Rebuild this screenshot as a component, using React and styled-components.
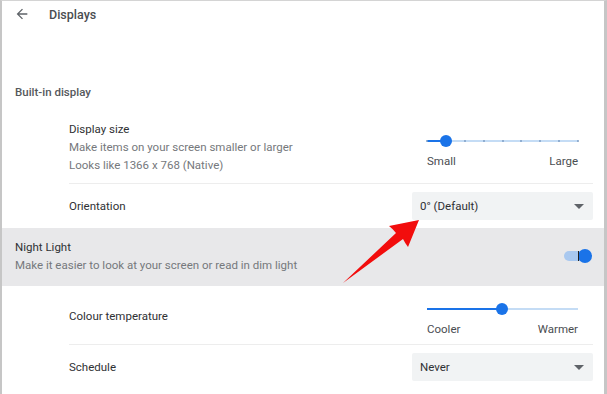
import styled, { createGlobalStyle } from "styled-components";

const GlobalStyle = createGlobalStyle`
  body {
    margin: 0;
    font-family: Roboto, "Liberation Sans", sans-serif;
    background: #fff;
  }
`;

export default function App() {
  return (
    <>
      <GlobalStyle />
      <Frame>
        <Header>
          <svg width="16" height="16" viewBox="0 0 24 24">
            <path fill="#5f6368" d="M20 11H7.83l5.59-5.59L12 4l-8 8 8 8 1.41-1.41L7.83 13H20v-2z" />
          </svg>
          <PageTitle>Displays</PageTitle>
        </Header>

        <SectionTitle>Built-in display</SectionTitle>

        <RowGroup>
          <Row pad="10px 0 9px">
            <div>
              <Label>Display size</Label>
              <Sub>Make items on your screen smaller or larger</Sub>
              <Sub>Looks like 1366 x 768 (Native)</Sub>
            </div>
            <Slider value={19} ticks={9} low="Small" high="Large" shift={10} />
          </Row>
          <Row pad="8px 0" last>
            <Label>Orientation</Label>
            <Dropdown>
              <span>0° (Default)</span>
              <Caret />
            </Dropdown>
          </Row>
        </RowGroup>

        <Band>
          <div>
            <Label>Night Light</Label>
            <Sub>Make it easier to look at your screen or read in dim light</Sub>
          </div>
          <Toggle>
            <ToggleTrack />
            <ToggleKnob />
            <Cursor />
          </Toggle>
        </Band>

        <RowGroup>
          <Row pad="7px 0 6px">
            <Label>Colour temperature</Label>
            <Slider value={75} low="Cooler" high="Warmer" shift={9} />
          </Row>
          <Row pad="8px 0" last>
            <Label>Schedule</Label>
            <Dropdown>
              <span>Never</span>
              <Caret />
            </Dropdown>
          </Row>
        </RowGroup>

        <Pointer viewBox="0 0 607 394">
          <path
            fill="#f20d0d"
            d="M419 220 L389 226 Q393 229 396 233 L343 283 L403 239 Q405 243 408 247 Z"
          />
        </Pointer>
      </Frame>
    </>
  );
}

function Slider({ value, ticks, low, high, shift }) {
  return (
    <SliderBlock shift={shift}>
      <Track>
        <TrackFill style={{ width: `${value / 1.51}%` }} />
        {ticks &&
          Array.from({ length: ticks }).map((_, i) => (
            <Tick key={i} style={{ left: `${(i / (ticks - 1)) * 100}%` }} />
          ))}
        <Knob style={{ left: `${value / 1.51}%` }} />
      </Track>
      <SliderLabels>
        <span>{low}</span>
        <span>{high}</span>
      </SliderLabels>
    </SliderBlock>
  );
}

const Frame = styled.div`
  position: relative;
  width: 607px;
  height: 394px;
  box-sizing: border-box;
  border-left: 2px solid #c6c6c6;
  border-top: 1px solid #d4d4d4;
  border-right: 3px solid #c6c6c6;
  overflow: hidden;
  background: #fff;
`;

const Header = styled.div`
  display: flex;
  align-items: center;
  height: 26px;
  padding-left: 12px;
`;

const PageTitle = styled.div`
  margin-left: 19px;
  font-size: 12.5px;
  font-weight: 500;
  color: #4a4d51;
`;

const SectionTitle = styled.div`
  margin: 56px 0 9px 13px;
  font-size: 11.5px;
  line-height: 18px;
  font-weight: 500;
  color: #55585c;
`;

const RowGroup = styled.div`
  margin: 0 11px 0 67px;
`;

const Row = styled.div`
  display: flex;
  align-items: center;
  justify-content: space-between;
  padding: ${(p) => p.pad};
  border-bottom: ${(p) => (p.last ? "none" : "1px solid #ededed")};
`;

const Label = styled.div`
  font-size: 11.5px;
  line-height: 18px;
  color: #2f3134;
`;

const Sub = styled.div`
  font-size: 11.5px;
  line-height: 18px;
  color: #75787c;
`;

const Dropdown = styled.div`
  display: flex;
  align-items: center;
  justify-content: space-between;
  box-sizing: border-box;
  width: 181px;
  height: 28px;
  padding: 0 9px 0 8px;
  background: #f1f3f4;
  border-radius: 2px;
  font-size: 11.5px;
  color: #2f3134;
`;

const Caret = styled.span`
  width: 0;
  height: 0;
  border-left: 5px solid transparent;
  border-right: 5px solid transparent;
  border-top: 5px solid #5f6368;
`;

const SliderBlock = styled.div`
  width: 151px;
  margin-right: 15px;
  padding-top: ${(p) => p.shift}px;
`;

const Track = styled.div`
  position: relative;
  height: 14px;
  &::before {
    content: "";
    position: absolute;
    left: 0;
    right: 0;
    top: 6px;
    height: 2px;
    background: #c4dcf5;
  }
`;

const TrackFill = styled.div`
  position: absolute;
  left: 0;
  top: 6px;
  height: 2px;
  background: #1a73e8;
`;

const Tick = styled.div`
  position: absolute;
  top: 6px;
  width: 2px;
  height: 2px;
  margin-left: -1px;
  border-radius: 50%;
  background: #7f9fc4;
`;

const Knob = styled.div`
  position: absolute;
  top: 1px;
  width: 12px;
  height: 12px;
  margin-left: -6px;
  border-radius: 50%;
  background: #1a73e8;
`;

const SliderLabels = styled.div`
  display: flex;
  justify-content: space-between;
  margin-top: 4px;
  font-size: 11.5px;
  line-height: 18px;
  color: #4a4d51;
`;

const Band = styled.div`
  display: flex;
  align-items: center;
  justify-content: space-between;
  padding: 10px 12px 12px 13px;
  background: #e8e8ea;
`;

const Toggle = styled.div`
  position: relative;
  width: 28px;
  height: 14px;
`;

const ToggleTrack = styled.div`
  position: absolute;
  left: 0;
  top: 2px;
  width: 24px;
  height: 10px;
  border-radius: 5px;
  background: #a9c8ef;
`;

const ToggleKnob = styled.div`
  position: absolute;
  right: 0;
  top: 0;
  width: 14px;
  height: 14px;
  border-radius: 50%;
  background: #1a73e8;
`;

const Cursor = styled.div`
  position: absolute;
  left: 14px;
  top: 2px;
  width: 1px;
  height: 10px;
  background: #222;
`;

const Pointer = styled.svg`
  position: absolute;
  left: -2px;
  top: -1px;
  width: 607px;
  height: 394px;
  pointer-events: none;
`;
